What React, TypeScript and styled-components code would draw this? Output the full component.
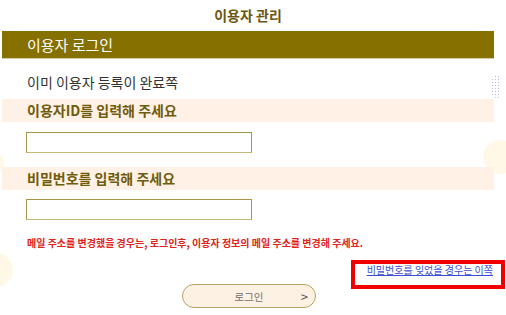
import styled, { createGlobalStyle } from 'styled-components';

const GlobalStyle = createGlobalStyle`
  html, body {
    margin: 0;
    padding: 0;
    background: #ffffff;
  }
  body {
    font-family: 'Noto Sans CJK KR', 'Noto Sans', sans-serif;
  }
`;

const Page = styled.div`
  position: relative;
  width: 506px;
  height: 315px;
  overflow: hidden;
  background: #ffffff;
`;

// decorative background circles
const Blob = styled.div<{ $x: number; $y: number; $size: number }>`
  position: absolute;
  left: ${(p) => p.$x}px;
  top: ${(p) => p.$y}px;
  width: ${(p) => p.$size}px;
  height: ${(p) => p.$size}px;
  border-radius: 50%;
  background: #fff8e6;
`;

const Dots = styled.div`
  position: absolute;
  left: 491px;
  top: 75px;
  width: 10px;
  height: 23px;
  border-radius: 50% 0 0 50%;
  background-image: radial-gradient(circle, #bdb6e4 0.7px, transparent 0.9px);
  background-size: 3px 3px;
`;

const Content = styled.div`
  position: relative;
  margin-left: 2px;
  width: 492px;
`;

const Title = styled.h1`
  margin: 0;
  height: 31px;
  line-height: 31px;
  text-align: center;
  font-size: 14px;
  font-weight: 700;
  color: #6b5810;
`;

const SectionBar = styled.div`
  height: 27px;
  line-height: 27px;
  padding-left: 25px;
  background: #857000;
  border-bottom: 1px solid #d9cfa2;
  color: #ffffff;
  font-size: 15px;
`;

const Intro = styled.p`
  margin: 0;
  padding: 14px 0 8px 25px;
  line-height: 18px;
  font-size: 14px;
  color: #333333;
`;

const LabelBar = styled.div`
  height: 23px;
  line-height: 23px;
  padding-left: 25px;
  background: #fff1e5;
  color: #6f5c0e;
  font-size: 14px;
  font-weight: 700;
`;

const InputRow = styled.div<{ $top: number; $bottom: number }>`
  padding: ${(p) => p.$top}px 0 ${(p) => p.$bottom}px 24px;
`;

const TextInput = styled.input`
  display: block;
  box-sizing: border-box;
  width: 226px;
  height: 21px;
  margin: 0;
  border: 1px solid #a89548;
  border-bottom-color: #c8b97a;
  background: #ffffff;
  outline: none;
`;

const Notice = styled.p`
  margin: 16px 0 0 25px;
  line-height: 14px;
  font-size: 10px;
  font-weight: 700;
  color: #e2231a;
  white-space: nowrap;
`;

const LinkRow = styled.div`
  position: relative;
  display: flex;
  justify-content: flex-end;
  margin-top: 10px;
  height: 20px;
  padding-right: 1px;
  line-height: 20px;

  /* red highlight frame drawn over the link */
  &::after {
    content: '';
    position: absolute;
    left: 349px;
    top: 0;
    width: 154px;
    height: 29px;
    box-sizing: border-box;
    border: 4px solid #f00000;
    pointer-events: none;
  }
`;

const ForgotLink = styled.a`
  font-size: 10px;
  color: #3a4fd8;
  text-decoration: underline;
  cursor: pointer;
`;

const ButtonRow = styled.div`
  display: flex;
  justify-content: center;
  margin-top: 4px;
  padding-left: 2px;
`;

const LoginButton = styled.button`
  display: grid;
  grid-template-columns: 1fr auto 1fr;
  align-items: center;
  box-sizing: border-box;
  width: 134px;
  height: 24px;
  padding: 0 7px;
  border: 1.5px solid #b7a45c;
  border-radius: 12px;
  background: #fdf1e3;
  color: #707070;
  font-family: inherit;
  font-size: 10.5px;
  cursor: pointer;
`;

const Arrow = styled.span`
  justify-self: end;
  font-size: 13px;
  color: #555555;
  line-height: 1;
`;

export default function App() {
  return (
    <>
      <GlobalStyle />
      <Page>
        <Blob $x={-21} $y={253} $size={34} />
        <Blob $x={483} $y={140} $size={34} />
        <Blob $x={-14} $y={154} $size={18} />
        <Dots />
        <Content>
          <Title>이용자 관리</Title>
          <SectionBar>이용자 로그인</SectionBar>
          <Intro>이미 이용자 등록이 완료쪽</Intro>
          <LabelBar>이용자ID를 입력해 주세요</LabelBar>
          <InputRow $top={10} $bottom={14}>
            <TextInput type="text" />
          </InputRow>
          <LabelBar>비밀번호를 입력해 주세요</LabelBar>
          <InputRow $top={9} $bottom={0}>
            <TextInput type="password" />
          </InputRow>
          <Notice>메일 주소를 변경했을 경우는, 로그인후, 이용자 정보의 메일 주소를 변경해 주세요.</Notice>
          <LinkRow>
            <ForgotLink>비밀번호를 잊었을 경우는 이쪽</ForgotLink>
          </LinkRow>
          <ButtonRow>
            <LoginButton type="button">
              <span />
              <span>로그인</span>
              <Arrow>&gt;</Arrow>
            </LoginButton>
          </ButtonRow>
        </Content>
      </Page>
    </>
  );
}
